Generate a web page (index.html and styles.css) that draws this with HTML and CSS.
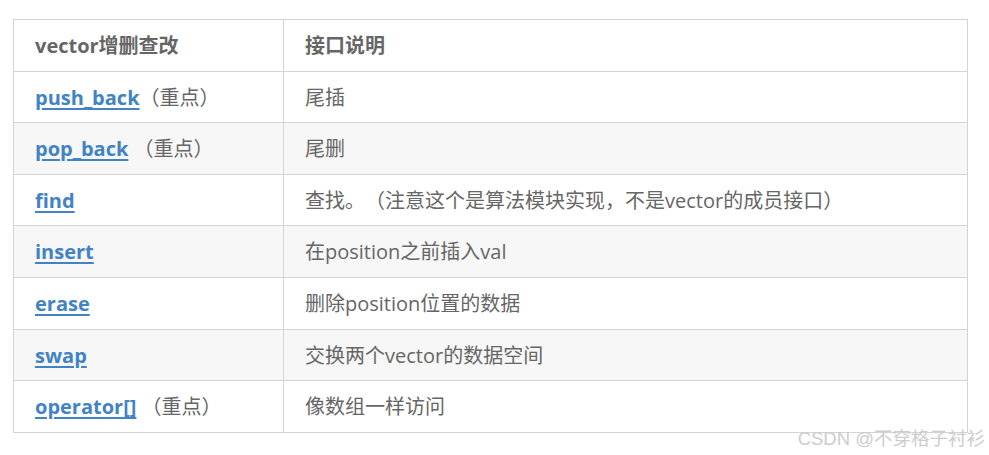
FILE: index.html
```html
<!DOCTYPE html>
<html lang="zh-CN">
<head>
<meta charset="utf-8">
<title>vector</title>
<link rel="stylesheet" href="styles.css">
</head>
<body>
<div class="wrap">
<table class="tbl">
  <thead>
    <tr><th class="c1">vector增删查改</th><th>接口说明</th></tr>
  </thead>
  <tbody>
    <tr><td><a href="#">push_back</a>（重点）</td><td>尾插</td></tr>
    <tr><td><a href="#">pop_back</a> （重点）</td><td>尾删</td></tr>
    <tr><td><a href="#">find</a></td><td>查找。（注意这个是算法模块实现，不是vector的成员接口）</td></tr>
    <tr><td><a href="#">insert</a></td><td>在position之前插入val</td></tr>
    <tr><td><a href="#">erase</a></td><td>删除position位置的数据</td></tr>
    <tr><td><a href="#">swap</a></td><td>交换两个vector的数据空间</td></tr>
    <tr><td><a href="#">operator[]</a> （重点）</td><td>像数组一样访问</td></tr>
  </tbody>
</table>
<div class="mark">CSDN @不穿格子衬衫</div>
</div>
</body>
</html>
```
FILE: styles.css
```css
html, body {
  margin: 0;
  padding: 0;
  background: #fff;
}
body {
  font-family: "Open Sans", "Noto Sans CJK SC", sans-serif;
  color: #666;
  text-spacing-trim: space-all;
}
.wrap {
  position: relative;
  padding: 19px 21px 0 13px;
  height: 436px;
}
.tbl {
  border-collapse: collapse;
  width: 955px;
  font-size: 20px;
}
.tbl th, .tbl td {
  border: 1px solid #d4d4d4;
  padding: 12px 21px 10px 21px;
  line-height: 28.6px;
  text-align: left;
  white-space: nowrap;
}
.tbl th {
  font-weight: 700;
  color: #666;
}
.tbl .c1 {
  width: 227px;
}
.tbl tbody tr:nth-child(even) {
  background: #f7f7f7;
}
.tbl a {
  color: #4183c4;
  font-weight: 700;
  text-decoration: underline;
  text-underline-offset: 3px;
}
.mark {
  position: absolute;
  right: 4px;
  bottom: 5px;
  font-family: "Liberation Sans", "Noto Sans CJK SC", sans-serif;
  font-size: 18.5px;
  color: #cdcdcd;
}
```
